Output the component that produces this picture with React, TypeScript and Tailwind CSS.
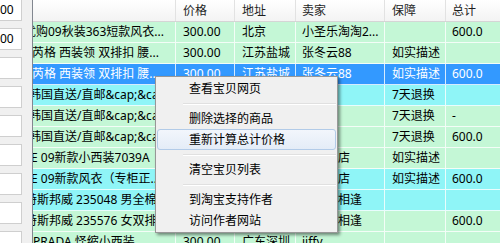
import React from 'react';

type Row = {
  title: string;
  off: number;
  price: string;
  addr: string;
  seller: string;
  guard: string;
  total: string;
  kind: 'green' | 'cyan' | 'sel';
};

const rows: Row[] = [
  { title: '优购09秋装363短款风衣...', off: -9, price: '300.00', addr: '北京', seller: '小圣乐淘淘2...', guard: '', total: '600.0', kind: 'green' },
  { title: '芮格 西装领 双排扣 腰...', off: -1, price: '300.00', addr: '江苏盐城', seller: '张冬云88', guard: '如实描述', total: '', kind: 'green' },
  { title: '芮格 西装领 双排扣 腰...', off: -1, price: '300.00', addr: '江苏盐城', seller: '张冬云88', guard: '如实描述', total: '600.0', kind: 'sel' },
  { title: '韩国直送/直邮&cap;&cap;...', off: -4, price: '300.00', addr: '上海', seller: '韩国馆', guard: '7天退换', total: '', kind: 'cyan' },
  { title: '韩国直送/直邮&cap;&cap;...', off: -4, price: '300.00', addr: '上海', seller: '韩国馆', guard: '7天退换', total: '-', kind: 'green' },
  { title: '韩国直送/直邮&cap;&cap;...', off: -4, price: '300.00', addr: '上海', seller: '韩国馆', guard: '7天退换', total: '600.0', kind: 'green' },
  { title: 'E 09新款小西装7039A', off: -2, price: '300.00', addr: '浙江杭州', seller: '衣衣小店', guard: '如实描述', total: '', kind: 'green' },
  { title: 'E 09新款风衣（专柜正...', off: -2, price: '300.00', addr: '浙江杭州', seller: '衣衣小店', guard: '如实描述', total: '600.0', kind: 'cyan' },
  { title: '特斯邦威 235048 男全棉...', off: -8, price: '300.00', addr: '上海', seller: '在西湖相逢', guard: '', total: '', kind: 'cyan' },
  { title: '特斯邦威 235576 女双排...', off: -8, price: '300.00', addr: '上海', seller: '在西湖相逢', guard: '', total: '600.0', kind: 'green' },
  { title: 'PRADA 怪缩小西装', off: 0, price: '300.00', addr: '广东深圳', seller: 'jiffy...', guard: '', total: '', kind: 'green' },
];

const rowBg = {
  green: 'bg-[#c4f7d6] text-black',
  cyan: 'bg-[#8ff5f7] text-black',
  sel: 'bg-[#3399ff] text-white',
};

const Cell = ({ w, pl, children }: { w: string; pl: string; children?: React.ReactNode }) => (
  <div className={`flex h-full shrink-0 items-center overflow-hidden whitespace-nowrap border-r border-white/80 ${w} ${pl}`}>
    {children}
  </div>
);

const MenuItem = ({ label, hover }: { label: string; hover?: boolean }) => (
  <div
    className={`flex h-[21px] items-center rounded-[3px] border pl-[31px] ${
      hover ? 'border-[#b2cbe8] bg-linear-to-b from-[#f2f6fc] to-[#e4ecf7]' : 'border-transparent'
    }`}
  >
    {label}
  </div>
);

const Separator = () => (
  <div className="flex h-[9px] items-center pl-[26px]">
    <div className="h-[2px] flex-1 border-t border-b border-t-[#e0e0e0] border-b-white" />
  </div>
);

export default function App() {
  return (
    <div className="relative flex h-[243px] w-[500px] overflow-hidden bg-[#f0f0f0] font-['Noto_Sans','Noto_Sans_CJK_SC',sans-serif] text-[12px] leading-none text-black">
      {/* left field strip */}
      <div className="-mt-px flex w-[32px] shrink-0 flex-col gap-[7px]">
        {Array.from({ length: 9 }).map((_, i) => (
          <div key={i} className="flex h-[22px] w-[22px] shrink-0 items-center border-y border-r border-[#cfcfcf] bg-white">
            {i < 2 ? '00' : ''}
          </div>
        ))}
      </div>

      {/* list */}
      <div className="flex flex-1 flex-col overflow-hidden border-l border-[#828790] bg-white">
        <div className="flex h-[22px] shrink-0 border-b border-[#d5d5d5] bg-linear-to-b from-white to-[#f3f3f3] text-[#1e1e1e]">
          <div className="h-full w-[143px] shrink-0 border-r border-[#e2e2e2]" />
          <div className="flex h-full w-[59px] shrink-0 items-center border-r border-[#e2e2e2] pl-[7px]">价格</div>
          <div className="flex h-full w-[61px] shrink-0 items-center border-r border-[#e2e2e2] pl-[7px]">地址</div>
          <div className="flex h-full w-[89px] shrink-0 items-center border-r border-[#e2e2e2] pl-[6px]">卖家</div>
          <div className="flex h-full w-[61px] shrink-0 items-center border-r border-[#e2e2e2] pl-[7px]">保障</div>
          <div className="flex h-full flex-1 items-center pl-[6px]">总计</div>
        </div>

        {rows.map((r, i) => (
          <div key={i} className={`flex h-[21px] shrink-0 border-b border-white/80 ${rowBg[r.kind]}`}>
            <Cell w="w-[143px]" pl="pl-0">
              <span style={{ marginLeft: r.off }}>{r.title}</span>
            </Cell>
            <Cell w="w-[59px]" pl="pl-[7px]">{r.price}</Cell>
            <Cell w="w-[61px]" pl="pl-[7px]">{r.addr}</Cell>
            <Cell w="w-[89px]" pl="pl-[6px]">{r.seller}</Cell>
            <Cell w="w-[61px]" pl="pl-[7px]">{r.guard}</Cell>
            <div className="flex h-full flex-1 items-center pl-[6px]">{r.total}</div>
          </div>
        ))}
      </div>

      {/* context menu */}
      <div className="absolute left-[155px] top-[76px] w-[183px] border border-[#979797] bg-[#f0f0f0] p-px text-black shadow-[2px_2px_3px_rgba(0,0,0,0.45)]">
        <MenuItem label="查看宝贝网页" />
        <Separator />
        <MenuItem label="删除选择的商品" />
        <MenuItem label="重新计算总计价格" hover />
        <Separator />
        <MenuItem label="清空宝贝列表" />
        <Separator />
        <MenuItem label="到淘宝支持作者" />
        <MenuItem label="访问作者网站" />
      </div>
    </div>
  );
}
